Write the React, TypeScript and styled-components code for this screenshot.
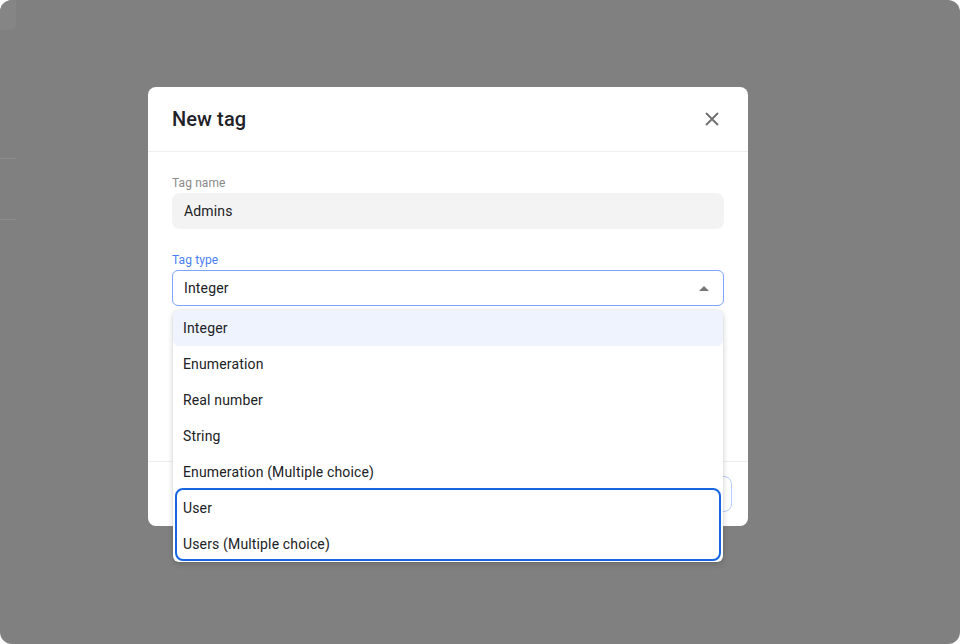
import React from "react";
import styled, { createGlobalStyle } from "styled-components";

const GlobalStyle = createGlobalStyle`
  html, body { margin: 0; padding: 0; background: #ffffff; }
  body { font-family: Roboto, "Noto Sans", Arial, sans-serif; -webkit-font-smoothing: antialiased; }
  * { box-sizing: border-box; }
`;

const Screen = styled.div`
  position: relative;
  width: 960px;
  height: 644px;
  border-radius: 12px;
  overflow: hidden;
  background: #808080;
`;

const AppShell = styled.div`
  display: flex;
  flex-direction: column;
  width: 16px;
  height: 100%;
`;

const TopTab = styled.div`
  height: 30px;
  background: #858585;
  border-bottom-right-radius: 6px;
`;

const SideRule = styled.div<{ $top: number }>`
  margin-top: ${(p) => p.$top}px;
  height: 1px;
  background: #8b8b8b;
`;

const Overlay = styled.div`
  position: absolute;
  inset: 0;
  padding: 87px 0 0 148px;
`;

const Modal = styled.div`
  width: 600px;
  background: #ffffff;
  border-radius: 8px;
  display: flex;
  flex-direction: column;
`;

const Header = styled.div`
  height: 65px;
  padding: 0 24px;
  display: flex;
  align-items: center;
  justify-content: space-between;
  border-bottom: 1px solid #eeeeee;
`;

const Title = styled.h2`
  margin: 0;
  font-size: 20px;
  font-weight: 500;
  color: #1f2328;
  letter-spacing: 0.1px;
`;

const CloseButton = styled.button`
  width: 24px;
  height: 24px;
  padding: 0;
  border: none;
  background: transparent;
  display: flex;
  align-items: center;
  justify-content: center;
  color: #737373;
  cursor: pointer;
`;

const Body = styled.div`
  min-height: 309px;
  padding: 23px 24px 0;
  display: flex;
  flex-direction: column;
  gap: 23px;
`;

const Field = styled.div`
  position: relative;
  display: flex;
  flex-direction: column;
  gap: 2px;
`;

const Label = styled.label<{ $active?: boolean }>`
  font-size: 12px;
  line-height: 16px;
  letter-spacing: 0.1px;
  color: ${(p) => (p.$active ? "#4a7ff4" : "#8a8a8a")};
`;

const TextInput = styled.div`
  height: 36px;
  padding: 0 12px;
  border-radius: 8px;
  background: #f3f3f3;
  display: flex;
  align-items: center;
  font-size: 14px;
  letter-spacing: 0.15px;
  color: #202124;
`;

const SelectBox = styled.div`
  height: 36px;
  padding: 0 14px 0 11px;
  border-radius: 6px;
  border: 1.5px solid #7ea3f8;
  background: #ffffff;
  display: flex;
  align-items: center;
  justify-content: space-between;
  font-size: 14px;
  letter-spacing: 0.15px;
  color: #202124;
`;

const Caret = styled.span`
  width: 0;
  height: 0;
  border-left: 5px solid transparent;
  border-right: 5px solid transparent;
  border-bottom: 5px solid #767676;
`;

const Menu = styled.div`
  position: absolute;
  top: calc(100% + 4px);
  left: 1px;
  right: 1px;
  z-index: 2;
  background: #ffffff;
  border-radius: 6px;
  box-shadow: 0 2px 6px rgba(0, 0, 0, 0.18), 0 0 1px rgba(0, 0, 0, 0.2);
  display: flex;
  flex-direction: column;
`;

const MenuItem = styled.div<{ $highlighted?: boolean }>`
  height: 36px;
  padding: 0 10px;
  display: flex;
  align-items: center;
  font-size: 14px;
  letter-spacing: 0.15px;
  color: #202124;
  border-radius: 6px;
  background: ${(p) => (p.$highlighted ? "#eef3fd" : "transparent")};
`;

const FocusGroup = styled.div`
  position: relative;
  &::after {
    content: "";
    position: absolute;
    top: -2px;
    left: 2px;
    right: 2px;
    bottom: 1px;
    border: 2px solid #1766e0;
    border-radius: 8px;
    pointer-events: none;
  }
`;

const Footer = styled.div`
  height: 65px;
  padding: 0 16px;
  border-top: 1px solid #eeeeee;
  display: flex;
  align-items: center;
  justify-content: flex-end;
  gap: 8px;
`;

const FooterButton = styled.button<{ $primary?: boolean }>`
  height: 36px;
  padding: 0 18px;
  border-radius: 8px;
  font-family: inherit;
  font-size: 14px;
  font-weight: 500;
  background: #ffffff;
  border: 1px solid ${(p) => (p.$primary ? "#b7cdfb" : "#dadce0")};
  color: ${(p) => (p.$primary ? "#9ab8f8" : "#3c4043")};
`;

const options = [
  "Integer",
  "Enumeration",
  "Real number",
  "String",
  "Enumeration (Multiple choice)",
];
const focused = ["User", "Users (Multiple choice)"];

export default function App() {
  return (
    <>
      <GlobalStyle />
      <Screen>
        <AppShell>
          <TopTab />
          <SideRule $top={128} />
          <SideRule $top={60} />
        </AppShell>
        <Overlay>
          <Modal>
            <Header>
              <Title>New tag</Title>
              <CloseButton aria-label="Close">
                <svg width="14" height="14" viewBox="0 0 14 14">
                  <path d="M1 1 L13 13 M13 1 L1 13" stroke="currentColor" strokeWidth="2" strokeLinecap="butt" />
                </svg>
              </CloseButton>
            </Header>
            <Body>
              <Field>
                <Label>Tag name</Label>
                <TextInput>Admins</TextInput>
              </Field>
              <Field>
                <Label $active>Tag type</Label>
                <SelectBox>
                  <span>Integer</span>
                  <Caret />
                </SelectBox>
                <Menu>
                  {options.map((o, i) => (
                    <MenuItem key={o} $highlighted={i === 0}>
                      {o}
                    </MenuItem>
                  ))}
                  <FocusGroup>
                    {focused.map((o) => (
                      <MenuItem key={o}>{o}</MenuItem>
                    ))}
                  </FocusGroup>
                </Menu>
              </Field>
            </Body>
            <Footer>
              <FooterButton>Cancel</FooterButton>
              <FooterButton $primary>Create</FooterButton>
            </Footer>
          </Modal>
        </Overlay>
      </Screen>
    </>
  );
}
